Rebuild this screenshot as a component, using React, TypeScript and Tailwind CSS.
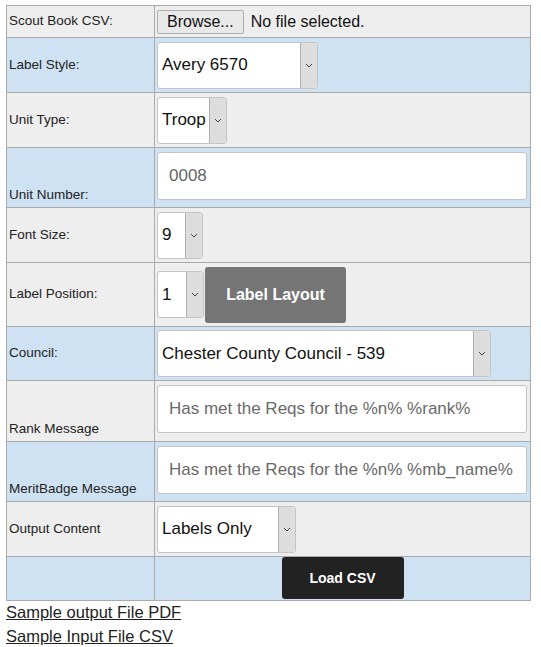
import React from "react";

const font = { fontFamily: '"Liberation Sans", Arial, sans-serif' };

function Chevron() {
  return (
    <svg width="8" height="5" viewBox="0 0 8 5" className="text-[#444]">
      <path d="M1 1 L4 4 L7 1" fill="none" stroke="currentColor" strokeWidth="1" />
    </svg>
  );
}

function Select({ value, width, height = "h-[47px]" }: { value: string; width: string; height?: string }) {
  return (
    <div className={`flex ${width} ${height} bg-white border border-[#c4c4c4] rounded-[3px] overflow-hidden`}>
      <div className="flex-1 flex items-center pl-[4px] text-[17px] text-[#111] whitespace-nowrap">{value}</div>
      <div className="w-[17px] flex items-center justify-center bg-[#dddddd] border-l border-[#b0b0b0]">
        <Chevron />
      </div>
    </div>
  );
}

function TextBox({ value, dim }: { value: string; dim?: boolean }) {
  return (
    <div className="flex items-center w-[370px] h-[48px] bg-white border border-[#c4c4c4] rounded-[3px] pl-[11px] text-[17px] text-[#6a6a6a] whitespace-nowrap">
      <span className={dim ? "text-[#666]" : ""}>{value}</span>
    </div>
  );
}

type Row = {
  label: string;
  h: string;
  blue?: boolean;
  bottom?: boolean;
  content: React.ReactNode;
};

export default function App() {
  const rows: Row[] = [
    {
      label: "Scout Book CSV:",
      h: "h-[32px]",
      content: (
        <div className="flex items-center gap-[7px]">
          <div className="h-[24px] px-[9px] flex items-center bg-[#e9e9e9] border border-[#adadad] rounded-[2px] text-[16px] text-[#111]">
            Browse...
          </div>
          <span className="text-[16px] text-[#111]">No file selected.</span>
        </div>
      ),
    },
    { label: "Label Style:", h: "h-[55px]", blue: true, content: <Select value="Avery 6570" width="w-[161px]" /> },
    { label: "Unit Type:", h: "h-[55px]", content: <Select value="Troop" width="w-[70px]" /> },
    { label: "Unit Number:", h: "h-[60px]", blue: true, bottom: true, content: <TextBox value="0008" dim /> },
    { label: "Font Size:", h: "h-[55px]", content: <Select value="9" width="w-[46px]" /> },
    {
      label: "Label Position:",
      h: "h-[64px]",
      content: (
        <div className="flex items-center gap-[1px]">
          <Select value="1" width="w-[47px]" />
          <div className="w-[141px] h-[56px] flex items-center justify-center bg-[#757575] rounded-[3px] text-white font-bold text-[16px]">
            Label Layout
          </div>
        </div>
      ),
    },
    { label: "Council:", h: "h-[54px]", blue: true, content: <Select value="Chester County Council - 539" width="w-[334px]" /> },
    { label: "Rank Message", h: "h-[61px]", bottom: true, content: <TextBox value="Has met the Reqs for the %n% %rank%" /> },
    { label: "MeritBadge Message", h: "h-[60px]", blue: true, bottom: true, content: <TextBox value="Has met the Reqs for the %n% %mb_name%" /> },
    { label: "Output Content", h: "h-[55px]", content: <Select value="Labels Only" width="w-[139px]" /> },
  ];

  return (
    <div className="pt-[5px] pl-[6px] bg-white min-h-[647px]" style={font}>
      <div className="w-[525px] border border-[#aaaaaa]">
        {rows.map((r, i) => (
          <div key={i} className={`flex ${r.h} border-b border-[#aaaaaa] ${r.blue ? "bg-[#cfe2f3]" : "bg-[#eeeeee]"}`}>
            <div
              className={`w-[148px] border-r border-[#aaaaaa] flex pl-[2px] text-[13.5px] text-[#222] ${
                r.bottom ? "items-end pb-[2px]" : "items-center"
              }`}
            >
              {r.label}
            </div>
            <div className={`flex-1 flex pl-[2px] ${r.bottom ? "items-start pt-[4px]" : "items-center"}`}>{r.content}</div>
          </div>
        ))}
        <div className="flex h-[43px] bg-[#cfe2f3]">
          <div className="w-[148px] border-r border-[#aaaaaa]" />
          <div className="flex-1 flex justify-center items-start">
            <div className="w-[122px] h-[42px] flex items-center justify-center bg-[#222222] rounded-[3px] text-white font-bold text-[14px]">
              Load CSV
            </div>
          </div>
        </div>
      </div>
      <div className="text-[16.5px] text-[#222] leading-[24px] mt-[-1px]">
        <div>
          <span className="underline">Sample output File PDF</span>
        </div>
        <div>
          <span className="underline">Sample Input File CSV</span>
        </div>
      </div>
    </div>
  );
}
